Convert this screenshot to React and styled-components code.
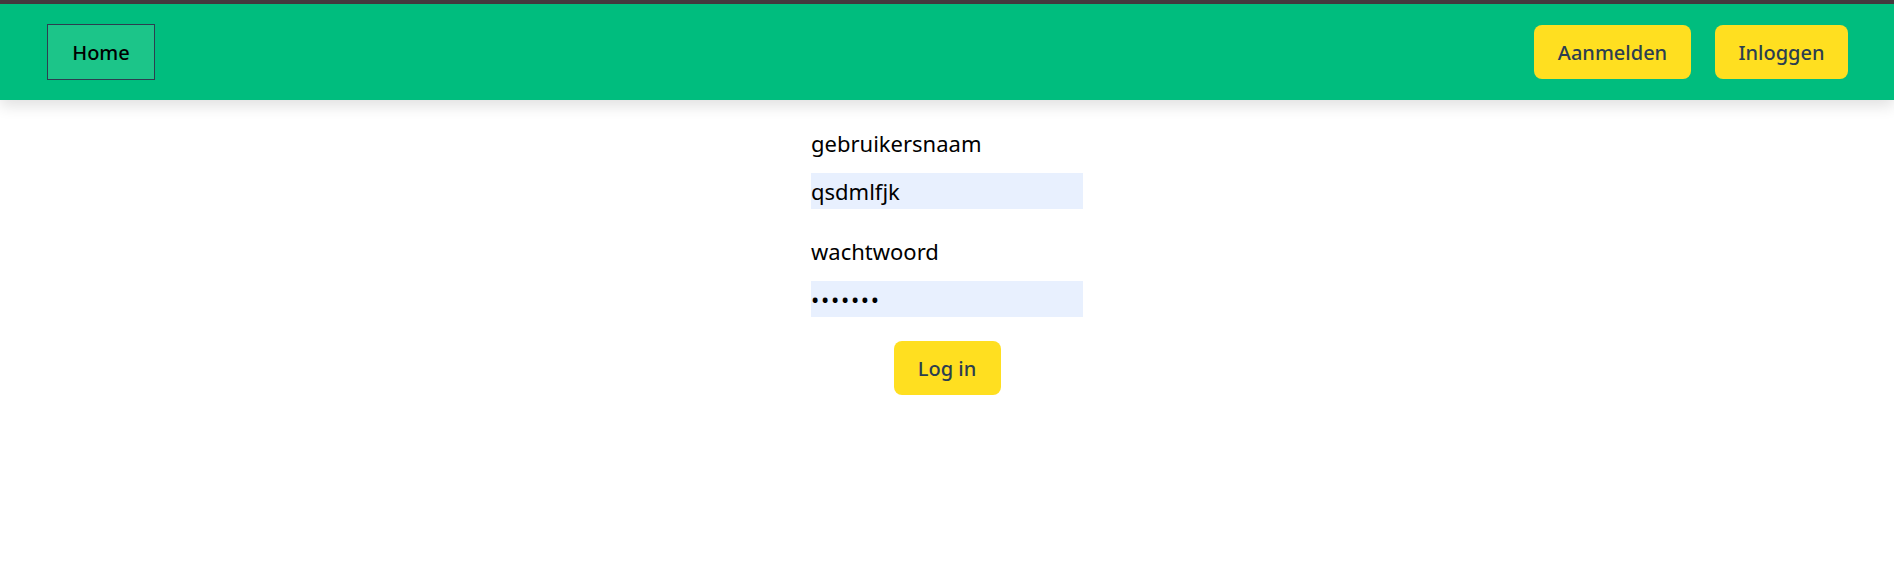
import React from "react";
import styled, { createGlobalStyle } from "styled-components";

const Global = createGlobalStyle`
  html, body { margin: 0; padding: 0; background: #fff; }
  body { font-family: "Noto Sans", "Open Sans", sans-serif; color: #000; }
  * { box-sizing: border-box; }
`;

const TopStrip = styled.div`
  height: 4px;
  background: #463a3f;
`;

const Nav = styled.nav`
  display: flex;
  align-items: center;
  justify-content: space-between;
  height: 96px;
  padding: 0 46px 0 47px;
  background: #00bd7e;
  box-shadow: 0 6px 14px rgba(0, 0, 0, 0.12);
  position: relative;
`;

const NavGroup = styled.div`
  display: flex;
  align-items: center;
  gap: 24px;
`;

const HomeLink = styled.a`
  display: flex;
  align-items: center;
  justify-content: center;
  width: 108px;
  height: 56px;
  background: #1cc589;
  border: 1px solid #2c3e50;
  color: #000;
  font-size: 20px;
  font-weight: 500;
  text-decoration: none;
`;

const YellowButton = styled.button`
  display: flex;
  align-items: center;
  justify-content: center;
  height: 54px;
  width: ${(p) => p.$w}px;
  border: none;
  border-radius: 8px;
  background: #ffdf20;
  color: #2c3e50;
  font-family: inherit;
  font-size: 20px;
  font-weight: 500;
  cursor: pointer;
`;

const Form = styled.form`
  width: 272px;
  margin: 0 auto;
  padding-top: 28px;
  display: flex;
  flex-direction: column;
`;

const Label = styled.label`
  font-size: 22px;
  line-height: 30px;
  margin-bottom: 15px;
`;

const Input = styled.input`
  width: 100%;
  height: 36px;
  border: none;
  outline: none;
  background: #e8f0fe;
  padding: 0;
  font-family: inherit;
  font-size: 22px;
  color: #000;
  letter-spacing: ${(p) => (p.type === "password" ? "1.7px" : "normal")};
  margin-bottom: ${(p) => p.$mb}px;
`;

const Center = styled.div`
  display: flex;
  justify-content: center;
`;

export default function App() {
  return (
    <>
      <Global />
      <TopStrip />
      <Nav>
        <NavGroup>
          <HomeLink href="#">Home</HomeLink>
        </NavGroup>
        <NavGroup>
          <YellowButton $w={157}>Aanmelden</YellowButton>
          <YellowButton $w={133}>Inloggen</YellowButton>
        </NavGroup>
      </Nav>
      <Form onSubmit={(e) => e.preventDefault()}>
        <Label>gebruikersnaam</Label>
        <Input type="text" defaultValue="qsdmlfjk" $mb={27} />
        <Label>wachtwoord</Label>
        <Input type="password" defaultValue="1234567" $mb={24} />
        <Center>
          <YellowButton type="submit" $w={107}>Log in</YellowButton>
        </Center>
      </Form>
    </>
  );
}
